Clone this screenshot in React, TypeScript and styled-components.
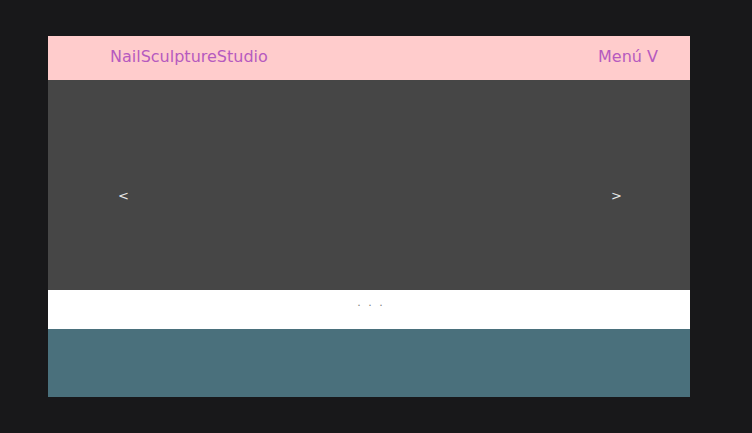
import React from "react";
import styled, { createGlobalStyle } from "styled-components";

const Global = createGlobalStyle`
  html, body { margin: 0; padding: 0; background: #18181a; }
  body { font-family: "DejaVu Sans", Verdana, sans-serif; }
`;

const Page = styled.div`
  width: 752px;
  height: 433px;
  padding: 36px 62px 36px 48px;
  box-sizing: border-box;
`;

const Frame = styled.div`
  display: flex;
  flex-direction: column;
  width: 642px;
`;

const Header = styled.header`
  height: 44px;
  background: #ffcccc;
  display: flex;
  align-items: center;
  justify-content: space-between;
  padding: 0 32px 3px 62px;
  box-sizing: border-box;
  color: #b65abf;
  font-size: 16px;
`;

const Brand = styled.div``;
const Menu = styled.div``;

const Carousel = styled.section`
  height: 210px;
  background: #464646;
  display: flex;
  align-items: center;
  justify-content: space-between;
  padding: 20px 68px 0 70px;
  box-sizing: border-box;
  color: #e8e8e8;
  font-size: 13px;
`;

const Arrow = styled.span`
  line-height: 1;
`;

const Dots = styled.div`
  height: 39px;
  background: #ffffff;
  display: flex;
  justify-content: center;
  padding: 6px 0 0 4px;
  box-sizing: border-box;
  color: #808080;
  font-size: 11px;
  letter-spacing: 2px;
`;

const Footer = styled.footer`
  height: 68px;
  background: #4a707c;
`;

export default function App() {
  return (
    <>
      <Global />
      <Page>
        <Frame>
          <Header>
            <Brand>NailSculptureStudio</Brand>
            <Menu>Menú V</Menu>
          </Header>
          <Carousel>
            <Arrow>&lt;</Arrow>
            <Arrow>&gt;</Arrow>
          </Carousel>
          <Dots>. . .</Dots>
          <Footer />
        </Frame>
      </Page>
    </>
  );
}
